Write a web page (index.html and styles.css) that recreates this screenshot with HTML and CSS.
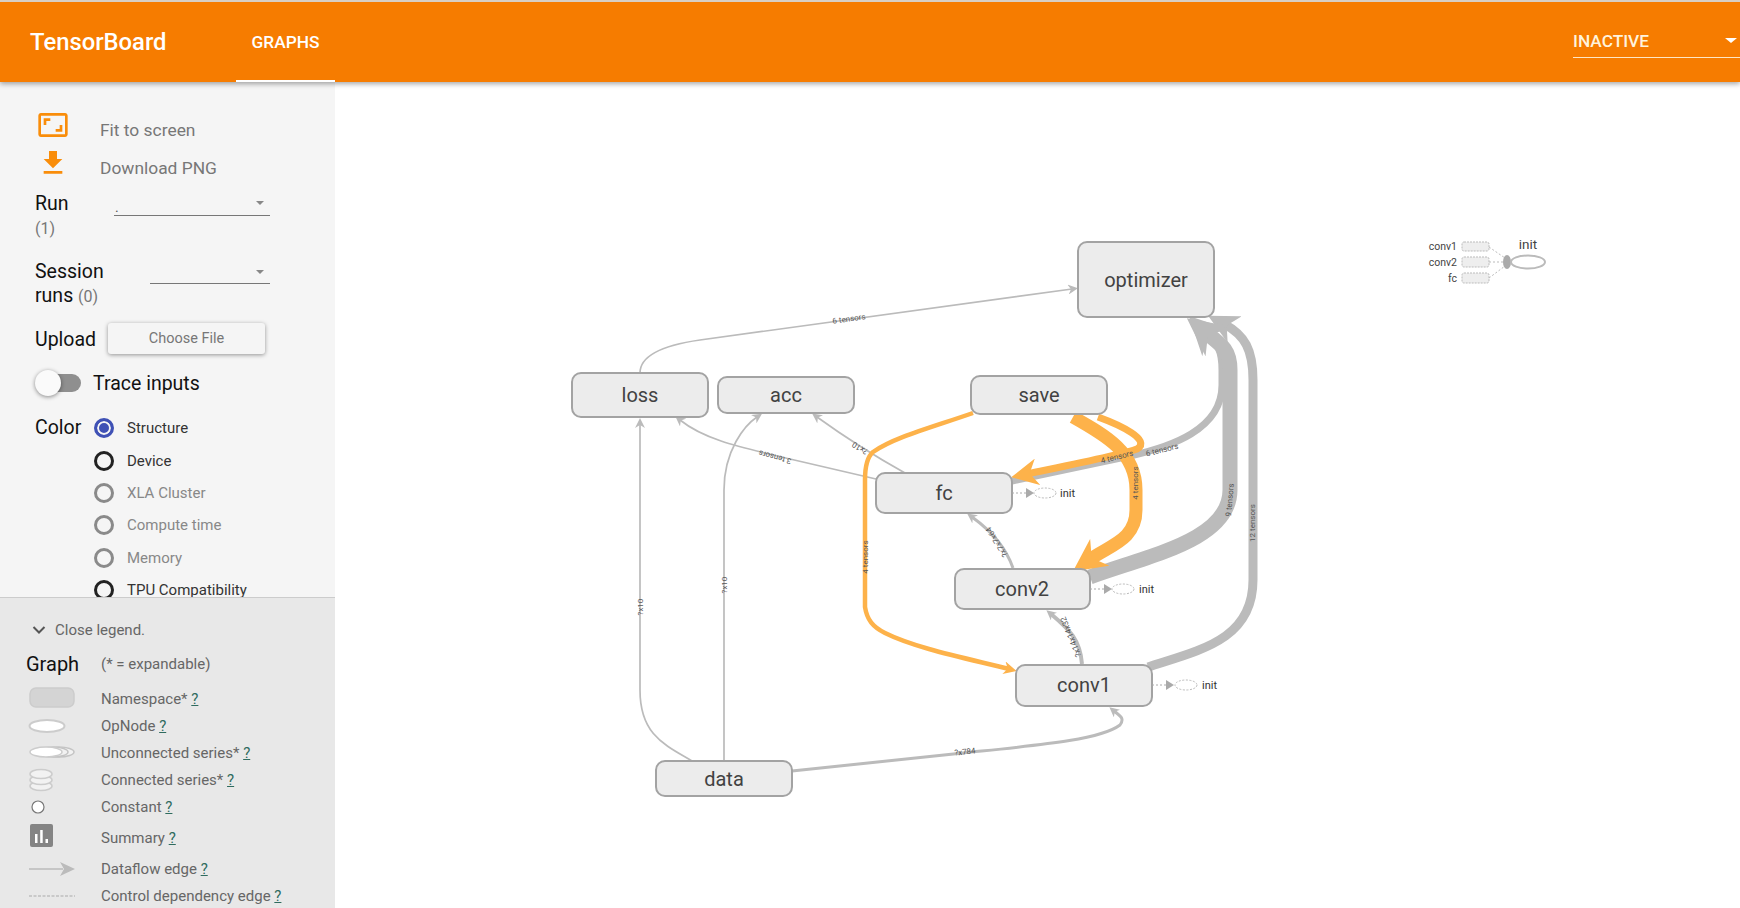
FILE: index.html
```html
<!DOCTYPE html>
<html lang="en">
<head>
<meta charset="UTF-8" />
<meta name="viewport" content="width=device-width, initial-scale=1" />
<title>TensorBoard</title>
<link rel="stylesheet" href="styles.css">
</head>
<body>

  <header class="toolbar">
    <div class="brand">TensorBoard</div>
    <div class="tab">GRAPHS</div>
    <div class="inactive">
      <span>INACTIVE</span>
      <i class="caret caret-white"></i>
    </div>
  </header>

  <div class="page">
    <aside class="sidebar">
      <div class="controls">
        <div class="action action-first">
          <svg class="action-icon" viewBox="0 0 24 24"><path d="M19 12h-2v3h-3v2h5v-5zM7 9h3V7H5v5h2V9zm14-6H3c-1.1 0-2 .9-2 2v14c0 1.1.9 2 2 2h18c1.1 0 2-.9 2-2V5c0-1.1-.9-2-2-2zm0 16.01H3V4.99h18v14.02z"/></svg>
          <span>Fit to screen</span>
        </div>
        <div class="action">
          <svg class="action-icon" viewBox="0 0 24 24"><path d="M19 9h-4V3H9v6H5l7 7 7-7zM5 18v2h14v-2H5z"/></svg>
          <span>Download PNG</span>
        </div>

        <div class="run-row">
          <label class="ctl-label">Run</label>
          <div class="select select-run"><span>.</span><i class="caret"></i></div>
        </div>
        <div class="count run-count">(1)</div>

        <div class="session-row">
          <label class="ctl-label session-label">Session<br>runs <span class="count">(0)</span></label>
          <div class="select select-session"><i class="caret"></i></div>
        </div>

        <div class="upload-row">
          <label class="ctl-label">Upload</label>
          <button class="file-btn">Choose File</button>
        </div>

        <div class="trace-row">
          <div class="toggle"><div class="toggle-knob"></div></div>
          <span class="trace-label">Trace inputs</span>
        </div>

        <div class="color-row">
          <label class="ctl-label">Color</label>
          <div class="radios">
            <div class="radio-item"><i class="radio radio-on"></i>Structure</div>
            <div class="radio-item"><i class="radio"></i>Device</div>
            <div class="radio-item off"><i class="radio"></i>XLA Cluster</div>
            <div class="radio-item off"><i class="radio"></i>Compute time</div>
            <div class="radio-item off"><i class="radio"></i>Memory</div>
            <div class="radio-item"><i class="radio"></i>TPU Compatibility</div>
          </div>
        </div>
      </div>

      <div class="legend">
        <div class="legend-toggle">
          <svg class="chevron" viewBox="0 0 14 10"><path d="M1.5 2 7 7.5 12.5 2"/></svg>
          <span>Close legend.</span>
        </div>
        <div class="legend-head"><span class="legend-title">Graph</span><span>(* = expandable)</span></div>

        <div class="legend-row h27">
          <svg class="legend-icon" viewBox="0 0 60 24"><rect x="4" y="1" width="44" height="19" rx="6" fill="#d4d4d4" stroke="#ccc" stroke-width="1.5"/></svg>
          <span>Namespace* <u>?</u></span>
        </div>
        <div class="legend-row h27">
          <svg class="legend-icon" viewBox="0 0 60 24"><ellipse cx="21" cy="12" rx="17.5" ry="6" fill="#fff" stroke="#ccc" stroke-width="2"/></svg>
          <span>OpNode <u>?</u></span>
        </div>
        <div class="legend-row h27">
          <svg class="legend-icon" viewBox="0 0 60 24"><ellipse cx="33" cy="11" rx="15" ry="5" fill="#f2f2f2" stroke="#c4c4c4" stroke-width="1.5"/><ellipse cx="27" cy="11" rx="15" ry="5" fill="#f2f2f2" stroke="#c4c4c4" stroke-width="1.5"/><ellipse cx="20" cy="11" rx="16" ry="5" fill="#fff" stroke="#ccc" stroke-width="1.5"/></svg>
          <span>Unconnected series* <u>?</u></span>
        </div>
        <div class="legend-row h27">
          <svg class="legend-icon" viewBox="0 0 60 24"><ellipse cx="15" cy="18" rx="11" ry="4.5" fill="#f2f2f2" stroke="#ccc" stroke-width="1.5"/><ellipse cx="15" cy="12" rx="11" ry="4.5" fill="#f2f2f2" stroke="#ccc" stroke-width="1.5"/><ellipse cx="15" cy="6" rx="11" ry="4.5" fill="#f2f2f2" stroke="#ccc" stroke-width="1.5"/></svg>
          <span>Connected series* <u>?</u></span>
        </div>
        <div class="legend-row h27">
          <svg class="legend-icon" viewBox="0 0 60 24"><circle cx="12" cy="12" r="6" fill="#fff" stroke="#777" stroke-width="1.2"/></svg>
          <span>Constant <u>?</u></span>
        </div>
        <div class="legend-row h35">
          <svg class="legend-icon legend-icon-tall" viewBox="0 0 60 30"><rect x="4" y="1" width="23" height="23" rx="2" fill="#848484"/><path d="M9 11h2.5v9H9zM14.2 7h2.5v13h-2.5zM19.5 16H22v4h-2.5z" fill="#fff"/></svg>
          <span>Summary <u>?</u></span>
        </div>
        <div class="legend-row h27">
          <svg class="legend-icon" viewBox="0 0 60 24"><path d="M3 12h34" stroke="#bbb" stroke-width="1.5"/><path d="M34 5l15 7-15 7 4-7z" fill="#bbb"/></svg>
          <span>Dataflow edge <u>?</u></span>
        </div>
        <div class="legend-row h27">
          <svg class="legend-icon" viewBox="0 0 60 24"><path d="M3 12h46" stroke="#aaa" stroke-width="1" stroke-dasharray="3 1.5"/></svg>
          <span>Control dependency edge <u>?</u></span>
        </div>
      </div>
    </aside>

    <main class="canvas">
      <svg class="graph" viewBox="335 82 1405 826">
        <defs>
          <marker id="head-gray" viewBox="0 0 10 10" refX="4" refY="5" markerUnits="userSpaceOnUse" markerWidth="10" markerHeight="10" orient="auto"><path d="M0 0 10 5 0 10 3 5z" fill="#bbb"/></marker>
          <marker id="head-gray-big" viewBox="0 0 10 10" refX="4" refY="5" markerUnits="userSpaceOnUse" markerWidth="30" markerHeight="30" orient="auto"><path d="M0 0 10 5 0 10 3 5z" fill="#bbb"/></marker>
          <marker id="head-gray-huge" viewBox="0 0 10 10" refX="4" refY="5" markerUnits="userSpaceOnUse" markerWidth="38" markerHeight="38" orient="auto"><path d="M0 0 10 5 0 10 3 5z" fill="#bbb"/></marker>
          <marker id="head-orange-s" viewBox="0 0 10 10" refX="4" refY="5" markerUnits="userSpaceOnUse" markerWidth="13" markerHeight="13" orient="auto"><path d="M0 0 10 5 0 10 3 5z" fill="#fdb24a"/></marker>
          <marker id="head-orange-m" viewBox="0 0 10 10" refX="4" refY="5" markerUnits="userSpaceOnUse" markerWidth="27" markerHeight="27" orient="auto"><path d="M0 0 10 5 0 10 3 5z" fill="#fdb24a"/></marker>
          <marker id="head-orange-l" viewBox="0 0 10 10" refX="4" refY="5" markerUnits="userSpaceOnUse" markerWidth="33" markerHeight="33" orient="auto"><path d="M0 0 10 5 0 10 3 5z" fill="#fdb24a"/></marker>
        </defs>

        <!-- dataflow edges -->
        <g class="edges">
          <path d="M640 373C640 355 665 345 700 340L1072 289" marker-end="url(#head-gray)"/>
          <path d="M692 761C665 745 640 735 640 690L640 424" marker-end="url(#head-gray)"/>
          <path d="M724 761L724 490C724 450 745 425 757 417" marker-end="url(#head-gray)"/>
          <path d="M876 479L790 459C740 447 705 440 680 420" marker-end="url(#head-gray)"/>
          <path d="M905 473Q860 448 817 417" marker-end="url(#head-gray)"/>
          <path class="w3" d="M1013 568C1005 545 990 530 972 517" marker-end="url(#head-gray)"/>
          <path class="w4" d="M1082 664C1080 640 1070 630 1051 614" marker-end="url(#head-gray)"/>
          <path class="w3" d="M792 771L963 753C1040 745 1100 740 1120 725C1125 718 1120 716 1114 711" marker-end="url(#head-gray)"/>
          <path class="w9" d="M1148 667C1200 650 1253 640 1253 580L1253 380C1253 350 1245 335 1224 324" marker-end="url(#head-gray-big)"/>
          <path class="w7" d="M1012 481L1130 456C1170 447 1222 430 1222 385L1222 370C1222 350 1218 345 1205 332" marker-end="url(#head-gray-huge)"/>
          <path class="w15" d="M1090 577C1150 555 1230 540 1230 490L1230 370C1230 350 1222 345 1205 332" marker-end="url(#head-gray-huge)"/>
        </g>

        <g class="edges edges-hot">
          <path class="w5" d="M973 413C930 428 895 437 873 452C866 458 865 470 865 480L865 607C867 620 873 627 885 633C915 648 965 658 1009 669" marker-end="url(#head-orange-s)"/>
          <path class="w7" d="M1098 417C1120 425 1152 440 1137 449C1125 454 1070 465 1027 474" marker-end="url(#head-orange-m)"/>
          <path class="w11" d="M1073 417C1105 435 1136 452 1136 490L1136 510C1136 540 1110 545 1089 560" marker-end="url(#head-orange-l)"/>
        </g>

        <!-- edge labels, some read upside down like in the graph view -->
        <g class="edge-labels">
          <text transform="translate(849 319) rotate(-8)">6 tensors</text>
          <text transform="translate(775 457) rotate(195)">3 tensors</text>
          <text transform="translate(860 448) rotate(212)">?x10</text>
          <text transform="translate(640 607) rotate(-90)">?x10</text>
          <text transform="translate(724 585) rotate(-90)">?x10</text>
          <text transform="translate(965 752) rotate(-6)">?x784</text>
          <text transform="translate(997 542) rotate(238)">?x7x7x64</text>
          <text transform="translate(1071 637) rotate(248)">?x14x14x32</text>
          <text transform="translate(865 557) rotate(-90)">4 tensors</text>
          <text transform="translate(1117 457) rotate(-14)">4 tensors</text>
          <text transform="translate(1162 450) rotate(-14)">6 tensors</text>
          <text transform="translate(1135 483) rotate(-90)">4 tensors</text>
          <text transform="translate(1230 500) rotate(-85)">9 tensors</text>
          <text transform="translate(1252 523) rotate(-90)">12 tensors</text>
        </g>

        <!-- namespace nodes -->
        <g class="nodes">
          <rect x="1078" y="242" width="136" height="75" rx="9"/><text x="1146" y="280">optimizer</text>
          <rect x="572" y="373" width="136" height="44" rx="9"/><text x="640" y="395">loss</text>
          <rect x="718" y="377" width="136" height="36" rx="9"/><text x="786" y="395">acc</text>
          <rect x="971" y="376" width="136" height="38" rx="9"/><text x="1039" y="395">save</text>
          <rect x="876" y="473" width="136" height="40" rx="9"/><text x="944" y="493">fc</text>
          <rect x="955" y="569" width="135" height="40" rx="9"/><text x="1022" y="589">conv2</text>
          <rect x="1016" y="665" width="136" height="41" rx="9"/><text x="1084" y="685">conv1</text>
          <rect x="656" y="761" width="136" height="35" rx="9"/><text x="724" y="779">data</text>
        </g>

        <!-- auxiliary init nodes -->
        <g class="aux">
          <path d="M1012 493H1026"/><polygon points="1026,488 1034,493 1026,498"/><ellipse cx="1045" cy="493" rx="11" ry="5"/><text x="1060" y="493">init</text>
          <path d="M1090 589H1104"/><polygon points="1104,584 1112,589 1104,594"/><ellipse cx="1123" cy="589" rx="11" ry="5"/><text x="1139" y="589">init</text>
          <path d="M1152 685H1166"/><polygon points="1166,680 1174,685 1166,690"/><ellipse cx="1186" cy="685" rx="11" ry="5"/><text x="1202" y="685">init</text>
        </g>

        <g class="init-extract">
          <path class="dots" d="M1489 247 1505 258M1489 262H1503M1489 278 1505 266"/>
          <rect x="1462" y="242" width="27" height="9" rx="2"/><text x="1457" y="246">conv1</text>
          <rect x="1462" y="257" width="27" height="10" rx="2"/><text x="1457" y="262">conv2</text>
          <rect x="1462" y="273" width="27" height="10" rx="2"/><text x="1457" y="278">fc</text>
          <ellipse class="bridge" cx="1507" cy="262" rx="4" ry="7"/>
          <ellipse class="init-op" cx="1528" cy="262" rx="17" ry="6.5"/>
          <text class="init-name" x="1528" y="244">init</text>
        </g>
      </svg>
    </main>
  </div>

</body>
</html>
```

FILE: styles.css
```css
html, body {
  margin: 0;
  padding: 0;
  height: 100%;
  overflow: hidden;
}

body {
  font-family: Roboto, "Liberation Sans", sans-serif;
  background: #fff;
  color: #111;
  display: flex;
  flex-direction: column;
}

/* top bar */
.toolbar {
  flex: 0 0 80px;
  display: flex;
  align-items: stretch;
  background: #f67c00;
  border-top: 2px solid #d8cfc4;
  color: #fff;
  box-shadow: 0 2px 5px rgba(0, 0, 0, 0.35);
  position: relative;
  z-index: 5;
}

.brand {
  width: 206px;
  padding: 0 0 0 30px;
  font-size: 23.8px;
  font-weight: 500;
  line-height: 80px;
}

.tab {
  width: 99px;
  height: 78px;
  line-height: 80px;
  text-align: center;
  font-size: 17.3px;
  font-weight: 500;
  border-bottom: 2px solid #fff;
}

.inactive {
  margin-left: auto;
  width: 167px;
  height: 56px;
  box-sizing: border-box;
  display: flex;
  align-items: center;
  justify-content: space-between;
  padding: 22px 3px 0 0;
  font-size: 17.3px;
  font-weight: 500;
  color: #fff3dc;
  border-bottom: 1px solid #ffe6c4;
}

.caret {
  width: 0;
  height: 0;
  border-left: 4px solid transparent;
  border-right: 4px solid transparent;
  border-top: 4px solid #888;
}

.caret-white {
  border-left-width: 6px;
  border-right-width: 6px;
  border-top: 5px solid #fff;
}

.page {
  flex: 1;
  display: flex;
  min-height: 0;
}

/* left panel */
.sidebar {
  flex: 0 0 335px;
  display: flex;
  flex-direction: column;
}

.controls {
  flex: 0 0 515px;
  box-sizing: border-box;
  overflow: hidden;
  background: #f5f5f5;
  padding: 29px 0 0 35px;
}

.action {
  height: 37px;
  display: flex;
  align-items: center;
  font-size: 17.4px;
  color: #777;
}

.action-first {
  height: 38px;
}

.action-icon {
  width: 32px;
  height: 32px;
  margin: -10px 31px 0 2px;
  fill: #f98d0a;
}

.ctl-label {
  font-size: 19.5px;
  line-height: 24px;
  color: #111;
}

.count {
  font-size: 16px;
  color: #777;
  line-height: 18px;
}

.run-count {
  margin-top: -1px;
}

.select {
  box-sizing: border-box;
  border-bottom: 1px solid #777;
  height: 25px;
  display: flex;
  align-items: center;
  justify-content: flex-end;
  padding-right: 6px;
  font-size: 14px;
  color: #555;
}

.run-row {
  margin-top: 1px;
  height: 34px;
  display: flex;
  align-items: center;
}

.run-row .ctl-label {
  width: 79px;
}

.select-run {
  width: 156px;
  margin-top: -2px;
  justify-content: space-between;
}

.select-run span {
  margin-top: 8px;
  padding-left: 1px;
}

.session-row {
  margin-top: 22px;
  height: 48px;
  display: flex;
}

.session-label {
  width: 115px;
}

.select-session {
  width: 120px;
  height: 24px;
}

.upload-row {
  margin-top: 15px;
  height: 34px;
  display: flex;
  align-items: center;
}

.upload-row .ctl-label {
  width: 73px;
}

.file-btn {
  width: 157px;
  height: 31px;
  margin-top: -4px;
  border: none;
  border-radius: 3px;
  background: #f5f5f5;
  box-shadow: 0 1px 4px rgba(0, 0, 0, 0.4);
  font-family: inherit;
  font-size: 14.5px;
  color: #777;
  padding: 0;
}

.trace-row {
  margin-top: 13px;
  height: 26px;
  display: flex;
  align-items: center;
}

.toggle {
  width: 43px;
  height: 18px;
  margin-left: 3px;
  border-radius: 9px;
  background: #8f8f8f;
  position: relative;
}

.toggle-knob {
  position: absolute;
  left: -3px;
  top: -4px;
  width: 26px;
  height: 26px;
  border-radius: 50%;
  background: #fafafa;
  box-shadow: 0 1px 4px rgba(0, 0, 0, 0.45);
}

.trace-label {
  margin-left: 12px;
  font-size: 19.5px;
}

.color-row {
  margin-top: 20px;
  display: flex;
  align-items: flex-start;
}

.color-row .ctl-label {
  width: 59px;
}

.radios {
  margin-top: -4px;
}

.radio-item {
  height: 32.4px;
  display: flex;
  align-items: center;
  font-size: 15px;
  color: #333;
}

.radio-item.off {
  color: #888;
}

.radio {
  box-sizing: border-box;
  width: 20px;
  height: 20px;
  margin-right: 13px;
  border-radius: 50%;
  border: 3px solid #222;
}

.off .radio {
  border-color: #8a8a8a;
}

.radio.radio-on {
  border-color: #3f51b5;
  background: #3f51b5;
  box-shadow: inset 0 0 0 2px #f5f5f5;
}

/* legend */
.legend {
  flex: 1;
  background: #e8e8e8;
  border-top: 1px solid #ccc;
  padding: 0 0 0 26px;
  font-size: 15px;
  color: #666;
}

.legend-toggle {
  height: 38px;
  margin-top: 13px;
  display: flex;
  align-items: center;
  padding-left: 6px;
}

.chevron {
  width: 14px;
  height: 10px;
  margin-right: 9px;
  fill: none;
  stroke: #555;
  stroke-width: 2;
}

.legend-head {
  height: 30px;
  margin-bottom: 6px;
  display: flex;
  align-items: center;
}

.legend-title {
  width: 75px;
  font-size: 20px;
  color: #111;
}

.legend-row {
  display: flex;
  align-items: center;
}

.h27 { height: 27px; }
.h35 { height: 35px; }

.legend-icon {
  width: 60px;
  height: 24px;
  margin-right: 15px;
  flex: none;
}

.legend-icon-tall {
  height: 30px;
}

.legend u {
  color: #2f6b5e;
}

/* graph canvas */
.canvas {
  flex: 1;
  min-width: 0;
  background: #fff;
}

.graph {
  display: block;
  width: 1405px;
  height: 826px;
}

.edges path {
  fill: none;
  stroke: #bbb;
  stroke-width: 1.7;
}

.edges .w3 { stroke-width: 3; }
.edges .w4 { stroke-width: 4; }
.edges .w5 { stroke-width: 4.5; }
.edges .w7 { stroke-width: 7; }
.edges .w9 { stroke-width: 9; }
.edges .w11 { stroke-width: 13; }
.edges .w15 { stroke-width: 15; }

.edges-hot path {
  stroke: #fdb24a;
}

.edge-labels text {
  font-size: 8px;
  fill: #555;
  text-anchor: middle;
  dominant-baseline: central;
}

.nodes rect {
  fill: #ececec;
  stroke: #a3a3a3;
  stroke-width: 2;
}

.nodes text {
  font-size: 20px;
  fill: #424242;
  text-anchor: middle;
  dominant-baseline: central;
}

.aux path {
  fill: none;
  stroke: #aaa;
  stroke-width: 1;
  stroke-dasharray: 2 2;
}

.aux polygon {
  fill: #aaa;
}

.aux ellipse {
  fill: #fff;
  stroke: #bbb;
  stroke-width: 1;
  stroke-dasharray: 2 1.5;
}

.aux text {
  font-size: 11px;
  fill: #333;
  dominant-baseline: central;
}

.init-extract .dots {
  fill: none;
  stroke: #bbb;
  stroke-width: 1;
  stroke-dasharray: 2 2;
}

.init-extract rect {
  fill: #eee;
  stroke: #bbb;
  stroke-width: 1;
  stroke-dasharray: 2 1;
}

.init-extract text {
  font-size: 10.5px;
  fill: #444;
  text-anchor: end;
  dominant-baseline: central;
}

.init-extract .bridge {
  fill: #aaa;
}

.init-extract .init-op {
  fill: #fff;
  stroke: #bbb;
  stroke-width: 2;
}

.init-extract .init-name {
  font-size: 13.5px;
  text-anchor: middle;
}
```
